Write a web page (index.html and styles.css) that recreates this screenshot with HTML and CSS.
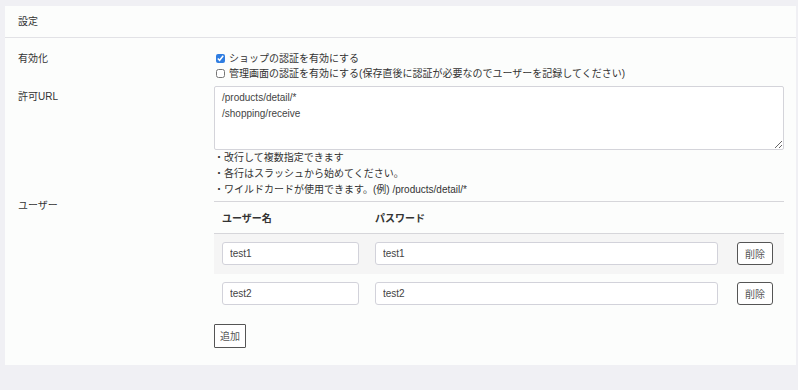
FILE: index.html
```html
<!DOCTYPE html>
<html lang="ja">
<head>
    <meta charset="UTF-8">
    <meta name="viewport" content="width=device-width, initial-scale=1.0">
    <title>設定</title>
    <link rel="stylesheet" href="styles.css">
</head>
<body>
    <div class="card">
        <div class="card-header">設定</div>

        <div class="card-body">
            <!-- 有効化 -->
            <div class="form-row">
                <div class="form-label">有効化</div>
                <div class="form-value">
                    <label class="check"><input type="checkbox" checked> ショップの認証を有効にする</label>
                    <label class="check"><input type="checkbox"> 管理画面の認証を有効にする(保存直後に認証が必要なのでユーザーを記録してください)</label>
                </div>
            </div>

            <!-- 許可URL -->
            <div class="form-row row-url">
                <div class="form-label label-url">許可URL</div>
                <div class="form-value">
                    <textarea class="url-list" rows="4">/products/detail/*
/shopping/receive</textarea>
                    <ul class="help">
                        <li>・改行して複数指定できます</li>
                        <li>・各行はスラッシュから始めてください。</li>
                        <li>・ワイルドカードが使用できます。(例) /products/detail/*</li>
                    </ul>
                </div>
            </div>

            <!-- ユーザー -->
            <div class="form-row">
                <div class="form-label">ユーザー</div>
                <div class="form-value">
                    <table class="users">
                        <thead>
                            <tr>
                                <th class="col-name">ユーザー名</th>
                                <th class="col-pass">パスワード</th>
                                <th class="col-del"></th>
                            </tr>
                        </thead>
                        <tbody>
                            <tr>
                                <td><input type="text" class="field" value="test1"></td>
                                <td><input type="text" class="field" value="test1"></td>
                                <td><button type="button" class="btn">削除</button></td>
                            </tr>
                            <tr>
                                <td><input type="text" class="field" value="test2"></td>
                                <td><input type="text" class="field" value="test2"></td>
                                <td><button type="button" class="btn">削除</button></td>
                            </tr>
                        </tbody>
                    </table>
                    <button type="button" class="btn btn-add">追加</button>
                </div>
            </div>
        </div>
    </div>
</body>
</html>
```

FILE: styles.css
```css
body {
    margin: 0;
    padding: 6px 2px 0 5px;
    background-color: #f0f0f4;
    font-family: "Liberation Sans", "Noto Sans CJK JP", sans-serif;
    font-size: 10px;
    color: #333;
}

.card {
    background-color: #fcfdfc;
    height: 359px;
    box-sizing: border-box;
}

.card-header {
    height: 31px;
    line-height: 31px;
    padding-left: 13px;
    border-bottom: 1px solid #e2e2e6;
}

.card-body {
    padding: 13px 12px 0 13px;
}

.form-row {
    display: flex;
}

.form-label {
    width: 196px;
    line-height: 15px;
    flex-shrink: 0;
}

.form-value {
    flex: 1;
    min-width: 0;
}

.check {
    display: flex;
    align-items: center;
    gap: 4px;
    line-height: 15px;
    white-space: nowrap;
}

.check input {
    margin: 0 0 0 2px;
    width: 9px;
    height: 9px;
    accent-color: #2f7de1;
}

.row-url {
    margin-top: 5px;
}

.label-url {
    padding-top: 3px;
}

.url-list {
    display: block;
    width: 100%;
    height: 64px;
    box-sizing: border-box;
    padding: 3px 7px;
    border: 1px solid #d4d4da;
    border-radius: 2px;
    font-family: "Liberation Sans", "Noto Sans CJK JP", sans-serif;
    font-size: 10px;
    line-height: 16px;
    color: #444;
    background-color: #fff;
}

.help {
    list-style: none;
    margin: 0;
    padding: 0;
    line-height: 16px;
}

.users {
    width: 100%;
    margin-top: 3px;
    border-collapse: collapse;
}

.users th {
    height: 31px;
    padding: 0 8px;
    text-align: left;
    font-weight: bold;
    border-top: 1px solid #d6d6da;
    border-bottom: 1px solid #d6d6da;
}

.users td {
    height: 40px;
    padding: 0 8px;
    box-sizing: border-box;
}

.users tbody tr:nth-child(odd) {
    background-color: #f5f5f5;
}

.col-name {
    width: 137px;
}

.col-del {
    width: 42px;
}

.field {
    display: block;
    width: 100%;
    height: 23px;
    box-sizing: border-box;
    padding: 0 7px;
    border: 1px solid #d2d2da;
    border-radius: 3px;
    background-color: #fff;
    font-family: "Liberation Sans", "Noto Sans CJK JP", sans-serif;
    font-size: 10px;
    color: #444;
}

.btn {
    height: 23px;
    padding: 0 7px;
    border: 1px solid #555;
    border-radius: 3px;
    background-color: #fff;
    font-family: "Liberation Sans", "Noto Sans CJK JP", sans-serif;
    font-size: 10px;
    color: #555;
    cursor: pointer;
}

.users .btn {
    margin-left: 3px;
}

.btn-add {
    margin-top: 10px;
    height: 24px;
    padding: 0 5px;
    border-radius: 1px;
}
```
